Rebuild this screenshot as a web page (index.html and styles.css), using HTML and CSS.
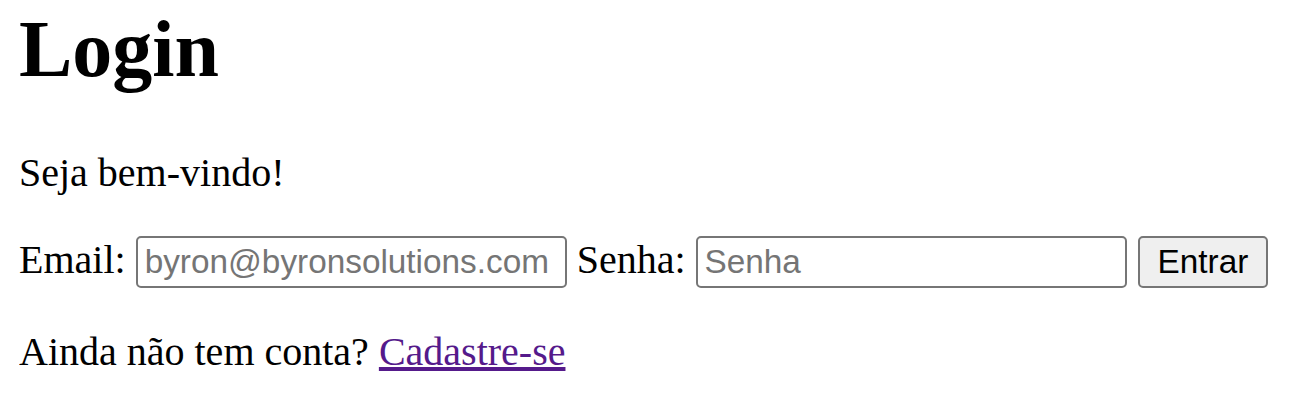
FILE: index.html
```html
<!DOCTYPE html>
<html lang="pt-BR">
<head>
<meta charset="utf-8">
<title>Login</title>
<link rel="stylesheet" href="styles.css">
</head>
<body>
<h1 class="title">Login</h1>
<p class="text">Seja bem-vindo!</p>
<form class="text login-form">
Email: <input class="field" type="email" placeholder="byron@byronsolutions.com"> Senha: <input class="field" type="password" placeholder="Senha"> <button class="btn" type="button">Entrar</button>
</form>
<p class="text last">Ainda não tem conta? <a class="link" href="#">Cadastre-se</a></p>
</body>
</html>
```
FILE: styles.css
```css
html, body {
  background: #ffffff;
}
body {
  margin: 4px 19px 0 19px;
  font-family: "Liberation Serif", "Times New Roman", serif;
  font-size: 40px;
  color: #000000;
}
.title {
  margin: 0 0 53.6px 0;
  font-size: 80px;
  font-weight: bold;
}
.text {
  margin: 40px 0;
}
.last {
  margin-bottom: 0;
}
.login-form {
  display: block;
}
.field {
  box-sizing: border-box;
  width: 431px;
  height: 52px;
  margin: 0;
  padding: 0 7px;
  border: 2.5px solid #767676;
  border-radius: 5px;
  font-family: "Liberation Sans", Arial, sans-serif;
  font-size: 33.33px;
  color: #000000;
  background: #ffffff;
  vertical-align: baseline;
}
.field::placeholder {
  color: #757575;
}
.btn {
  box-sizing: border-box;
  height: 52px;
  margin: 0 0 0 1px;
  padding: 0 18px;
  border: 2.5px solid #767676;
  border-radius: 5px;
  background: #efefef;
  font-family: "Liberation Sans", Arial, sans-serif;
  font-size: 33.33px;
  color: #000000;
}
.link {
  color: #551a8b;
  text-decoration: underline;
}
```
